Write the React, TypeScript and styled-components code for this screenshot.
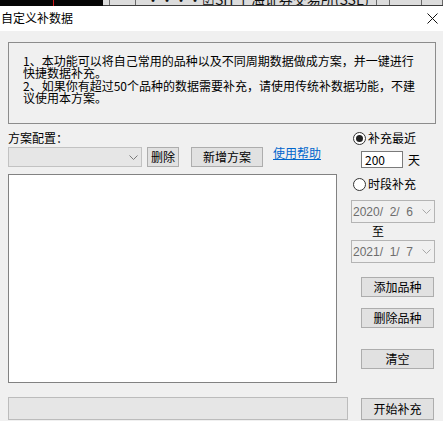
import React from "react";
import styled, { createGlobalStyle } from "styled-components";

const Global = createGlobalStyle`
  html, body { margin: 0; padding: 0; background: #f0f0f0; }
  body {
    font-family: "Noto Sans CJK SC", "Liberation Sans", sans-serif;
    font-size: 12px;
    color: #000;
  }
  * { box-sizing: border-box; }
`;

const Window = styled.div`
  width: 443px;
  height: 421px;
  overflow: hidden;
  display: flex;
  flex-direction: column;
  background: #f0f0f0;
`;

const TaskStrip = styled.div`
  height: 6px;
  display: flex;
  flex: none;
  overflow: hidden;
`;

const BlackPart = styled.div`
  width: 103px;
  background: #050505;
  display: flex;
`;

const RedLine = styled.div`
  width: 1px;
  margin-left: 53px;
  background: #d01818;
`;

const GrayPart = styled.div`
  flex: 1;
  display: flex;
  background: #dcdcdc;
  border-bottom: 1px solid #3c3c3c;
`;

const StripCell = styled.div<{ $w?: number; $grow?: boolean }>`
  ${(p) => (p.$grow ? "flex: 1;" : `width: ${p.$w}px;`)}
  border-right: 1px solid #6a6a6a;
  overflow: hidden;
  white-space: nowrap;
`;

const StripText = styled.div`
  font-size: 14px;
  line-height: 14px;
  margin-top: -8px;
  padding-left: 10px;
  color: #111;
`;

const TitleBar = styled.div`
  height: 25px;
  flex: none;
  background: #fff;
  display: flex;
  align-items: center;
  justify-content: space-between;
  padding: 0 5px 1px 1px;
`;

const Title = styled.span`
  font-size: 12px;
  line-height: 14px;
`;

const Body = styled.div`
  flex: 1;
  padding: 11px 7px 0 8px;
  display: flex;
  flex-direction: column;
`;

const InfoBox = styled.div`
  height: 82px;
  border: 1px solid #8c8c8c;
  padding: 12px 0 0 14px;
  display: flex;
  flex-direction: column;
  gap: 1px;
`;

const InfoPara = styled.p`
  margin: 0;
  width: 396px;
  line-height: 12px;
  font-size: 12px;
  word-break: break-all;
`;

const Main = styled.div`
  display: flex;
  gap: 3px;
`;

const LeftCol = styled.div`
  width: 340px;
  display: flex;
  flex-direction: column;
`;

const RightCol = styled.div`
  width: 85px;
  display: flex;
  flex-direction: column;
`;

const Label = styled.div`
  margin-top: 7px;
  height: 14px;
  line-height: 14px;
`;

const ConfigRow = styled.div`
  margin-top: 2px;
  height: 20px;
  display: flex;
  align-items: center;
`;

const Combo = styled.div`
  width: 134px;
  height: 20px;
  background: #e6e6e6;
  border: 1px solid #c2c2c2;
  display: flex;
  align-items: center;
  justify-content: flex-end;
  padding-right: 3px;
`;

const Button = styled.div<{ $w: number; $h?: number }>`
  width: ${(p) => p.$w}px;
  height: ${(p) => p.$h ?? 20}px;
  background: #e1e1e1;
  border: 1px solid #adadad;
  display: flex;
  align-items: center;
  justify-content: center;
  font-size: 12px;
  line-height: 14px;
  flex: none;
`;

const Spacer = styled.div<{ $w: number }>`
  width: ${(p) => p.$w}px;
  flex: none;
`;

const HelpLink = styled.a`
  color: #0066cc;
  text-decoration: underline;
  font-size: 12px;
  line-height: 14px;
  align-self: flex-start;
  margin-top: -1px;
  cursor: pointer;
`;

const ListBox = styled.div`
  margin-top: 7px;
  width: 329px;
  height: 209px;
  background: #fff;
  border: 1px solid #828282;
`;

const Progress = styled.div`
  margin-top: 14px;
  width: 340px;
  height: 23px;
  background: #e6e6e6;
  border: 1px solid #bcbcbc;
`;

const RadioRow = styled.div<{ $mt: number }>`
  margin-top: ${(p) => p.$mt}px;
  height: 14px;
  display: flex;
  align-items: center;
  padding-left: 2px;
  gap: 2px;
  line-height: 14px;
`;

const RadioCircle = styled.span<{ $on?: boolean }>`
  width: 13px;
  height: 13px;
  border-radius: 50%;
  border: 1px solid #333;
  background: #fff;
  display: flex;
  align-items: center;
  justify-content: center;
  flex: none;
  &::after {
    content: "";
    display: ${(p) => (p.$on ? "block" : "none")};
    width: 7px;
    height: 7px;
    border-radius: 50%;
    background: #222;
  }
`;

const DaysRow = styled.div`
  margin-top: 6px;
  height: 17px;
  display: flex;
  align-items: center;
  padding-left: 10px;
`;

const DaysInput = styled.div`
  width: 42px;
  height: 17px;
  background: #fff;
  border: 1px solid #7a7a7a;
  padding-left: 3px;
  line-height: 15px;
  font-size: 12px;
`;

const DayUnit = styled.span`
  margin-left: 5px;
  line-height: 14px;
`;

const DateBox = styled.div<{ $mt: number }>`
  margin-top: ${(p) => p.$mt}px;
  width: 84px;
  height: 23px;
  border: 1px solid #b4b4b4;
  background: #f0f0f0;
  display: flex;
  align-items: center;
  justify-content: space-between;
  padding: 0 3px 0 1px;
  color: #6d6d6d;
  font-family: "Liberation Sans", "Noto Sans CJK SC", sans-serif;
  font-size: 12px;
  white-space: pre;
`;

const ToLabel = styled.div`
  height: 17px;
  line-height: 14px;
  padding-left: 21px;
  padding-top: 1px;
`;

const SideButtonWrap = styled.div<{ $mt: number }>`
  margin-top: ${(p) => p.$mt}px;
  padding-left: 10px;
`;

const Chevron = ({ color = "#7a7a7a" }: { color?: string }) => (
  <svg width="9" height="5" viewBox="0 0 9 5">
    <polyline points="0.5,0.5 4.5,4.5 8.5,0.5" fill="none" stroke={color} strokeWidth="1" />
  </svg>
);

const CloseIcon = () => (
  <svg width="11" height="11" viewBox="0 0 11 11">
    <line x1="0.5" y1="0.5" x2="10.5" y2="10.5" stroke="#111" strokeWidth="1" />
    <line x1="10.5" y1="0.5" x2="0.5" y2="10.5" stroke="#111" strokeWidth="1" />
  </svg>
);

export default function App() {
  return (
    <>
      <Global />
      <Window>
        <TaskStrip>
          <BlackPart>
            <RedLine />
          </BlackPart>
          <GrayPart>
            <StripCell $w={7} />
            <StripCell $w={26} />
            <StripCell $w={241}>
              <StripText>····☑SH 上海证券交易所(SSE)</StripText>
            </StripCell>
            <StripCell $w={13} />
            <StripCell $w={32} />
            <StripCell $grow />
          </GrayPart>
        </TaskStrip>
        <TitleBar>
          <Title>自定义补数据</Title>
          <CloseIcon />
        </TitleBar>
        <Body>
          <InfoBox>
            <InfoPara>1、本功能可以将自己常用的品种以及不同周期数据做成方案，并一键进行快捷数据补充。</InfoPara>
            <InfoPara>2、如果你有超过50个品种的数据需要补充，请使用传统补数据功能，不建议使用本方案。</InfoPara>
          </InfoBox>
          <Main>
            <LeftCol>
              <Label>方案配置：</Label>
              <ConfigRow>
                <Combo>
                  <Chevron />
                </Combo>
                <Spacer $w={5} />
                <Button $w={32}>删除</Button>
                <Spacer $w={12} />
                <Button $w={72}>新增方案</Button>
                <Spacer $w={10} />
                <HelpLink>使用帮助</HelpLink>
              </ConfigRow>
              <ListBox />
              <Progress />
            </LeftCol>
            <RightCol>
              <RadioRow $mt={7}>
                <RadioCircle $on />
                <span>补充最近</span>
              </RadioRow>
              <DaysRow>
                <DaysInput>200</DaysInput>
                <DayUnit>天</DayUnit>
              </DaysRow>
              <RadioRow $mt={9}>
                <RadioCircle />
                <span>时段补充</span>
              </RadioRow>
              <DateBox $mt={9}>
                <span>2020/  2/  6</span>
                <Chevron color="#a8a8a8" />
              </DateBox>
              <ToLabel>至</ToLabel>
              <DateBox $mt={0}>
                <span>2021/  1/  7</span>
                <Chevron color="#a8a8a8" />
              </DateBox>
              <SideButtonWrap $mt={14}>
                <Button $w={73}>添加品种</Button>
              </SideButtonWrap>
              <SideButtonWrap $mt={11}>
                <Button $w={73}>删除品种</Button>
              </SideButtonWrap>
              <SideButtonWrap $mt={21}>
                <Button $w={73}>清空</Button>
              </SideButtonWrap>
              <SideButtonWrap $mt={29}>
                <Button $w={73} $h={22}>开始补充</Button>
              </SideButtonWrap>
            </RightCol>
          </Main>
        </Body>
      </Window>
    </>
  );
}
